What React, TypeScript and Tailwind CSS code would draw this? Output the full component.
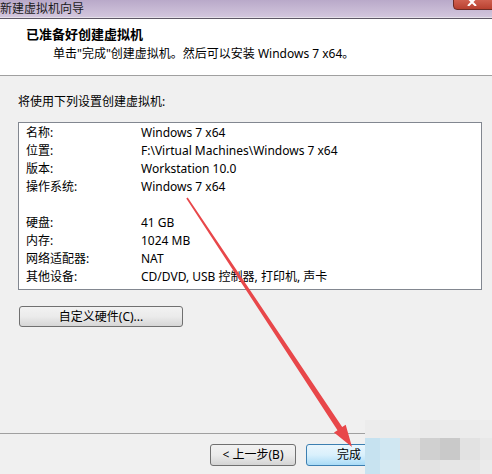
const FONT = '"Noto Sans", "Noto Sans CJK SC", sans-serif';

const rows: [string, string][] = [
  ['名称:', 'Windows 7 x64'],
  ['位置:', 'F:\\Virtual Machines\\Windows 7 x64'],
  ['版本:', 'Workstation 10.0'],
  ['操作系统:', 'Windows 7 x64'],
  ['', ''],
  ['硬盘:', '41 GB'],
  ['内存:', '1024 MB'],
  ['网络适配器:', 'NAT'],
  ['其他设备:', 'CD/DVD, USB 控制器, 打印机, 声卡'],
];

// mosaic watermark in the bottom-right corner
const mosaic = [
  ['#ececec', '#ebebeb', '#ececec', '#eaeaea', '#ebebeb', '#ececec', '#ededed'],
  ['#c6e2f0', '#d0e7f2', '#e0e0e0', '#d0d0d0', '#c9c9c9', '#e2e2e2', '#e8e8e8'],
  ['#c8e3f0', '#d5e9f2', '#e4e4e4', '#e3e3e3', '#e6e6e6', '#e6e6e6', '#ebebeb'],
];

function Arrow() {
  return (
    <svg className="absolute left-0 top-0 pointer-events-none" width="492" height="474" viewBox="0 0 492 474">
      <polygon
        points="187.7,197.6 342.2,427.1 345.7,424.8 352,447 334,432.5 337.5,430.2 186.3,198.4"
        fill="#e8474a"
      />
    </svg>
  );
}

export default function App() {
  return (
    <div
      className="relative w-[492px] h-[474px] overflow-hidden bg-[#f0f0f0] text-[12px] text-black flex flex-col"
      style={{ fontFamily: FONT }}
    >
      {/* Title bar */}
      <div className="h-[17px] shrink-0 bg-gradient-to-b from-[#b9a9c9] to-[#d2c6dd] flex items-center">
        <span className="leading-[12px] text-[#1a1a1a]">新建虚拟机向导</span>
      </div>
      <div className="h-px shrink-0 bg-[#e6e1ea]" />
      <div className="h-px shrink-0 bg-[#5e5866]" />

      {/* close button */}
      <div className="absolute left-[453px] top-[-4px] w-[46px] h-[14px] rounded-b-[4px] border border-[#6e2c25] bg-gradient-to-b from-[#d86a5a] to-[#b8402f] flex justify-center">
        <svg width="10" height="8" viewBox="0 0 10 8" className="mt-[1px] ml-[-8px]">
          <path d="M1 0 L5 4 L9 0 M5 4 L1 8 M5 4 L9 8" stroke="#fff" strokeWidth="2" fill="none" />
        </svg>
      </div>

      {/* Header */}
      <div className="h-[57px] shrink-0 bg-white border-b border-[#a0a0a0] pl-[26px] pt-[7px]">
        <div className="text-[13px] font-bold leading-[16px]">已准备好创建虚拟机</div>
        <div className="mt-[4px] pl-[27px] leading-[16px]">单击"完成"创建虚拟机。然后可以安装 Windows 7 x64。</div>
      </div>

      {/* Body */}
      <div className="flex-1 px-[18px] pt-[18px]">
        <div className="leading-[16px]">将使用下列设置创建虚拟机:</div>
        <div className="mt-[12px] w-[464px] h-[168px] bg-white border border-[#828790] pt-px">
          {rows.map(([label, value], i) => (
            <div key={i} className="flex h-[18px] items-center">
              <div className="w-[122px] pl-[7px]">{label}</div>
              <div>{value}</div>
            </div>
          ))}
        </div>
        <button className="mt-[16px] ml-px w-[164px] h-[21px] rounded-[3px] border border-[#707070] bg-gradient-to-b from-[#f2f2f2] via-[#ebebeb] to-[#d6d6d6] leading-[19px]">
          自定义硬件(C)...
        </button>
      </div>

      {/* Footer */}
      <div className="shrink-0 border-t border-[#a0a0a0] pt-[10px] pb-[8px] pl-[210px] flex gap-[10px]">
        <button className="w-[86px] h-[22px] rounded-[3px] border border-[#707070] bg-gradient-to-b from-[#f2f2f2] via-[#ebebeb] to-[#d4d4d4] leading-[20px]">
          &lt; 上一步(B)
        </button>
        <button className="w-[86px] h-[22px] rounded-[3px] border border-[#3c7fb1] bg-gradient-to-b from-[#eaf6fd] via-[#d9f0fc] to-[#a9dbf6] leading-[20px]">
          完成
        </button>
      </div>

      {/* watermark */}
      <div className="absolute left-[365px] top-[420px] grid grid-cols-[15px_20px_20px_20px_20px_20px_12px] grid-rows-[18px_22px_14px]">
        {mosaic.flatMap((row, r) =>
          row.map((c, i) => <div key={`${r}-${i}`} style={{ backgroundColor: c }} />)
        )}
      </div>

      <Arrow />
    </div>
  );
}
